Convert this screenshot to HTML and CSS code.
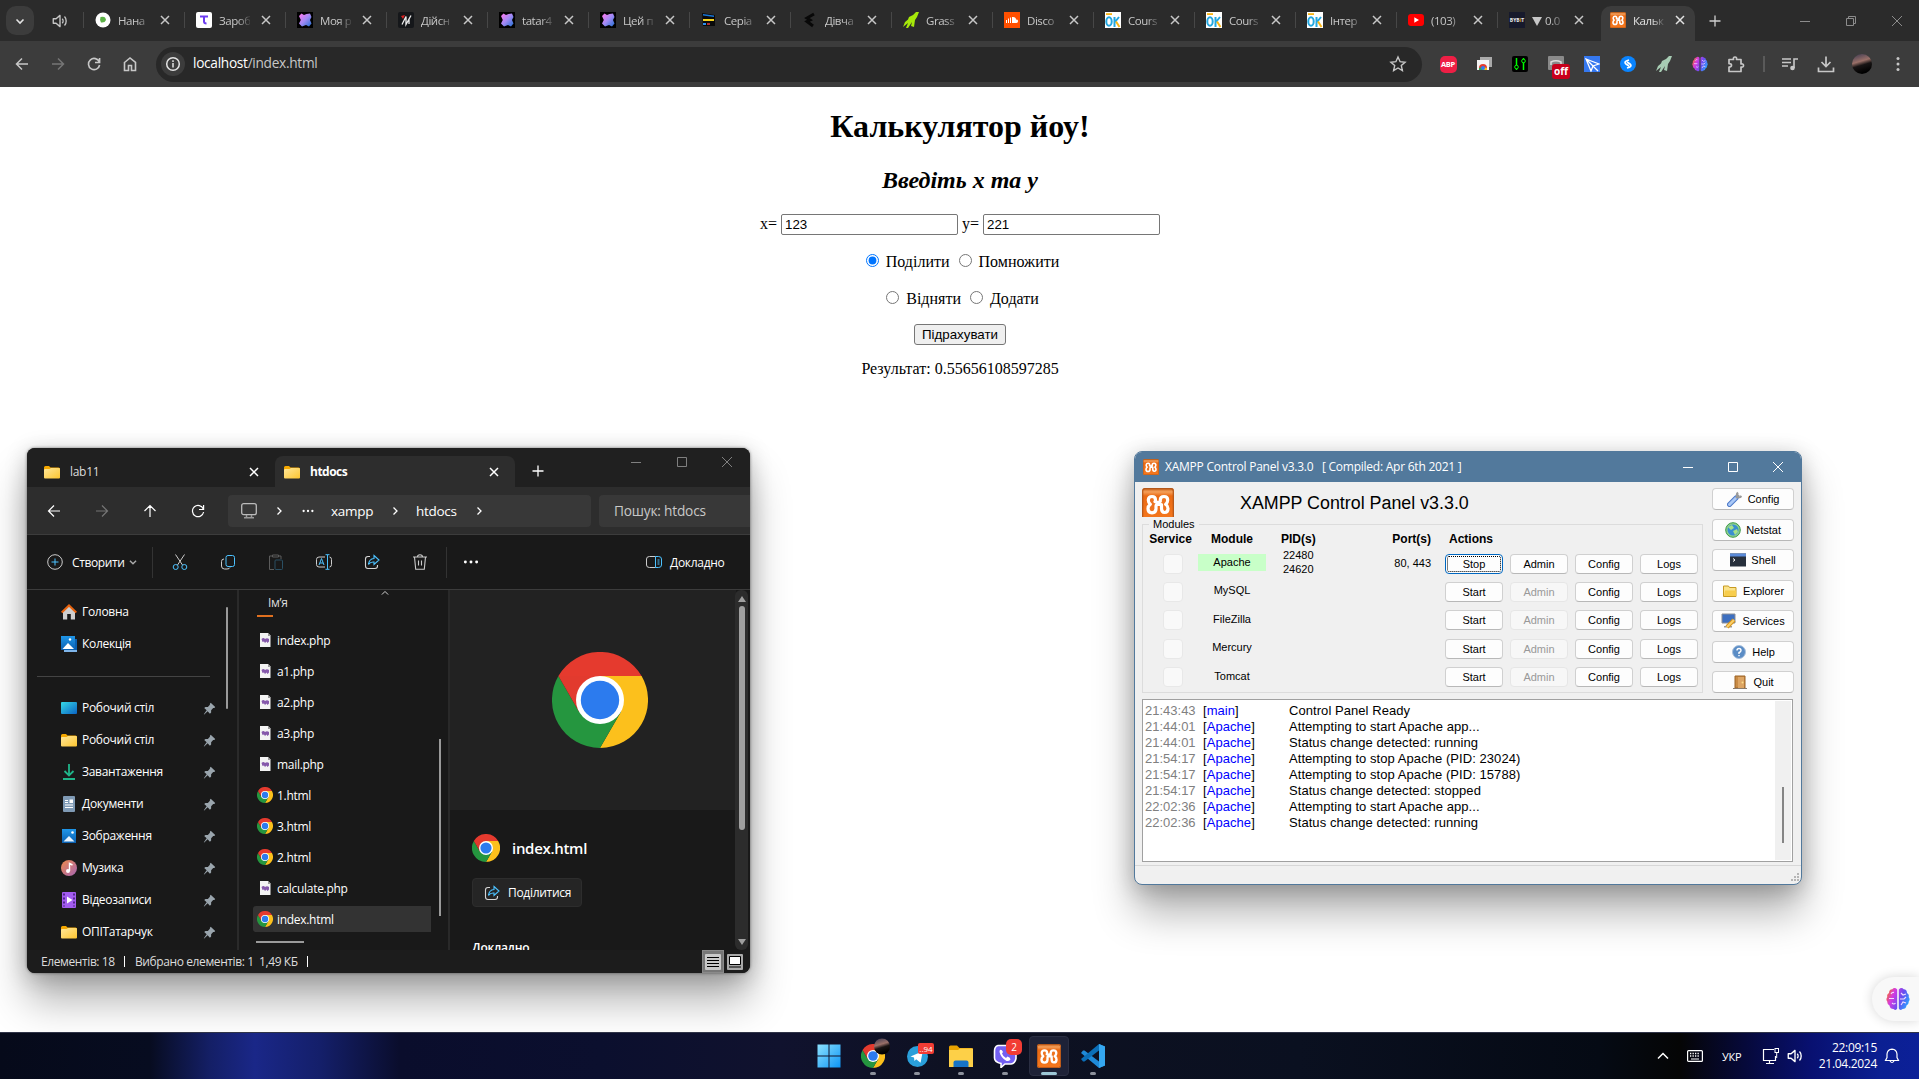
FILE: index.html
```html
<!DOCTYPE html>
<html lang="uk">
<head>
<meta charset="utf-8">
<title>Калькулятор</title>
<link rel="stylesheet" href="styles.css">
</head>
<body>
<svg class="defs" width="0" height="0">
  <defs>
    <linearGradient id="gBrain" x1="0" y1="0.3" x2="1" y2="0.7"><stop offset="0" stop-color="#f0663c"/><stop offset=".25" stop-color="#d63be0"/><stop offset=".6" stop-color="#6a4df0"/><stop offset="1" stop-color="#28a8ff"/></linearGradient>
    <linearGradient id="gX" x1="0" y1="0" x2="1" y2="1"><stop offset="0.1" stop-color="#f07af0"/><stop offset=".5" stop-color="#a08af5"/><stop offset="1" stop-color="#1f6fd0"/></linearGradient>
    <linearGradient id="gFolder" x1="0" y1="0" x2="1" y2="1"><stop offset="0" stop-color="#ffe79a"/><stop offset="1" stop-color="#fdc52f"/></linearGradient>
    <linearGradient id="gOrange" x1="0" y1="0" x2="0" y2="1"><stop offset="0" stop-color="#c25a12"/><stop offset=".12" stop-color="#f5a05a"/><stop offset=".25" stop-color="#ea6a14"/><stop offset="1" stop-color="#f5781e"/></linearGradient>
    <linearGradient id="gWin" gradientUnits="userSpaceOnUse" x1="0" y1="0" x2="24" y2="24"><stop offset="0" stop-color="#8fe3ff"/><stop offset="1" stop-color="#0a93f5"/></linearGradient>
    <linearGradient id="gDesk" x1="0" y1="0" x2="1" y2="1"><stop offset="0" stop-color="#35d9e6"/><stop offset="1" stop-color="#0b63c4"/></linearGradient>
    <linearGradient id="gPic" x1="0" y1="0" x2="0" y2="1"><stop offset="0" stop-color="#1f96e8"/><stop offset="1" stop-color="#0a5fb0"/></linearGradient>
    <linearGradient id="gMus" x1="0" y1="0" x2="1" y2="1"><stop offset="0" stop-color="#f08a4a"/><stop offset="1" stop-color="#a565b5"/></linearGradient>
    <linearGradient id="gSky" x1="0" y1="0" x2=".3" y2="1"><stop offset="0" stop-color="#3a3850"/><stop offset=".45" stop-color="#9a7068"/><stop offset=".65" stop-color="#181414"/><stop offset="1" stop-color="#000"/></linearGradient>
    <symbol id="close" viewBox="0 0 16 16"><path d="M4 4l8 8M12 4l-8 8" stroke="currentColor" stroke-width="1.5" fill="none"/></symbol>
    <symbol id="thinx" viewBox="0 0 16 16"><path d="M3 3l10 10M13 3L3 13" stroke="currentColor" fill="none"/></symbol>
    <symbol id="min" viewBox="0 0 16 16"><path d="M3 8.5h10" stroke="currentColor" fill="none"/></symbol>
    <symbol id="max" viewBox="0 0 16 16"><path d="M3.500 3.500h9v9h-9z" stroke="currentColor" fill="none"/></symbol>
    <symbol id="plus" viewBox="0 0 16 16"><path d="M8 2.500v11M2.500 8h11" stroke="currentColor" stroke-width="1.300" fill="none"/></symbol>
    <symbol id="cdown" viewBox="0 0 16 16"><path d="M4.500 6.500L8 10l3.500-3.500" stroke="currentColor" stroke-width="1.600" fill="none"/></symbol>
    <symbol id="cright" viewBox="0 0 16 16"><path d="M6.500 4.500L10 8l-3.500 3.500" stroke="currentColor" stroke-width="1.300" fill="none"/></symbol>
    <symbol id="cup" viewBox="0 0 16 16"><path d="M3 10.500L8 5.500l5 5" stroke="currentColor" stroke-width="1.500" fill="none"/></symbol>
    <symbol id="left" viewBox="0 0 16 16"><path d="M14 8H2.500M8 2.500L2.500 8 8 13.500" stroke="currentColor" stroke-width="var(--sw,1.5)" fill="none"/></symbol>
    <symbol id="right" viewBox="0 0 16 16"><path d="M2 8h11.500M8 2.500L13.500 8 8 13.500" stroke="currentColor" stroke-width="var(--sw,1.5)" fill="none"/></symbol>
    <symbol id="up" viewBox="0 0 16 16"><path d="M8 14V2.500M2.500 8L8 2.500 13.500 8" stroke="currentColor" stroke-width="1.200" fill="none"/></symbol>
    <symbol id="reload" viewBox="0 0 16 16"><path d="M13.300 6A5.600 5.600 0 1 0 13.600 9M13.600 2v4.500H9" stroke="currentColor" stroke-width="var(--sw,1.6)" fill="none"/></symbol>
    <symbol id="speaker" viewBox="0 0 16 16"><path d="M2 6h2.500L8 3v10L4.500 10H2z" stroke="currentColor" stroke-width="1.200" fill="none" stroke-linejoin="round"/><path d="M10 6c1 1 1 3 0 4M12 4c2 2 2 6 0 8" stroke="currentColor" stroke-width="1.200" fill="none"/></symbol>
    <symbol id="dots" viewBox="0 0 16 16"><circle cx="3" cy="8" r="1.300"/><circle cx="8" cy="8" r="1.300"/><circle cx="13" cy="8" r="1.300"/></symbol>
    <symbol id="chrome" viewBox="0 0 48 48"><path d="M24 24L3.200 12A24 24 0 0 1 44.800 12z" fill="#e53a2e"/><path d="M24 12h20.800A24 24 0 0 1 24 48L34.400 30z" fill="#fcc01c"/><path d="M3.200 12A24 24 0 0 0 24 48l10.400-18L24 24 13.600 30z" fill="#25963f"/><path d="M3.200 12L13.600 30 24 24V12z" fill="#e23a2e"/><circle cx="24" cy="24" r="12" fill="#fff"/><circle cx="24" cy="24" r="9.600" fill="#2c7bee"/></symbol>
    <symbol id="folder" viewBox="0 0 16 16"><path d="M0 3.500Q0 2 1.500 2H5l1.500 1.500h8Q16 3.500 16 5v3H0z" fill="#f5a800"/><path d="M0 6q0-1 1-1h4.500L7 4h8q1 0 1 1v8.500q0 1-1 1H1q-1 0-1-1z" fill="url(#gFolder)"/></symbol>
    <symbol id="xampp" viewBox="0 0 32 32"><rect width="32" height="32" rx="3" fill="url(#gOrange)"/><rect x=".7" y=".7" width="30.600" height="30.600" rx="2.500" fill="none" stroke="#b4571a" stroke-width="1.200"/><path d="M13.500 13.500V12q0-3.500-3.500-3.500T6.300 12q0 2.800 2 4.300-2.300 1.700-2.300 4.500 0 4 4 4t4-4V18q0-1.500 2-1.500t3.500 0V20q0 4.500 3 4.500 3.500 0 3.500-4 0-2.500-2.300-4.200 2-1.500 2-4.300 0-3.500-3.700-3.500t-3.700 3.500v1.500q-2.500 1.500-5.300 0z" fill="#ee7420" stroke="#fff" stroke-width="3.200" stroke-linejoin="round"/></symbol>
    <symbol id="brain" viewBox="0 0 24 24"><path d="M11.200 2.500Q8.500-.3 6.300 2.200 3 2.300 3 6 .5 7.500 1.300 10-.5 12.500 1.300 14.500 1 17.500 3.500 18.500 4 22 7.500 22q2.500 2 3.700-.5zM12.800 2.500q2.700-2.800 4.900-.3Q21 2.300 21 6q2.500 1.500 1.700 4 1.800 2.500 0 4.500.3 3-2.200 4-.5 3.500-4 3.500-2.500 2-3.700-.5z" fill="url(#gBrain)"/><path d="M3 11.500h5M5 7q1-2 3-1.500M6 16q2 2 3.500 0M15 6l2 2 3-1M14 12h4l2-2M15 18l2-3 3 1" stroke="#f2dcff" stroke-width="1.100" fill="none"/></symbol>
    <symbol id="xfav" viewBox="0 0 16 16"><path d="M0 0h16v16H0z"/><path d="M4.500 1.500l2.500 1.500 2.500-1 3.500-.5 1.500 3.500-1.500 3 1.500 3.500-2.500 3-3-1.500-4 1.500L2 11.500 3.800 8 2 4z" fill="url(#gX)"/></symbol>
    <symbol id="ok" viewBox="0 0 16 16"><path d="M0 0h16v16H0z" fill="#fff"/><path d="M1 1.200h6v1.800H1z" fill="#f9b515"/><ellipse cx="4" cy="9.500" rx="2.700" ry="4.300" fill="none" stroke="#22a7e0" stroke-width="2"/><path d="M9.500 5v10M14 5l-4 5" stroke="#22a7e0" stroke-width="2"/><path d="M11 9.500l3.500 5.500" stroke="#f9b515" stroke-width="2" fill="none"/></symbol>
    <symbol id="plant" viewBox="0 0 16 16"><path d="M0 15L2 10l3-2.500L6 5l4-2 3-3h3L14 5l-2 3-1 7-3-1 1-4-4 6H3l2-5z" fill="currentColor"/></symbol>
    <symbol id="php" viewBox="0 0 16 16"><path d="M3 1h8l2.500 2.500V15H3z" fill="#f3f3f3"/><path d="M11 1v3h2.500z" fill="#999"/><path d="M4.500 7q2-2 3.500 0 2-1.500 4 0v2.500l-1.500 1.500-1-1.500-1.500 1.500-1-1.500-1.500.5z" fill="#8558ab"/></symbol>
    <symbol id="pin" viewBox="0 0 16 16"><path d="M9.500 1L15 6.300l-1 1.200h-1.500l-2.500 2.500v3L8.500 14.500 5.700 11.500 1.500 15.500 1 15l3.500-4.800L1.500 7.500l1.500-1.500h3l2.500-2.500V2z" fill="#9aa5ad"/></symbol>
    <symbol id="share" viewBox="0 0 16 16"><path d="M6 2.500H4Q1.500 2.500 1.500 5v7Q1.500 14.500 4 14.500h7q2.500 0 2.500-2.500v-1" fill="none" stroke="#d5d5d5" stroke-width="1.100"/><path d="M10 1.500L15 6l-5 4.500V8Q6.500 7.500 4.500 10.500 5 5 10 4.500z" fill="none" stroke="#4cc2ff" stroke-width="1.100"/></symbol>
    <symbol id="image" viewBox="0 0 16 16"><path d="M1 1h14v14H1z" fill="url(#gPic)"/><path d="M2.500 13.500L8 8l5.500 5.500z" fill="#e8f5ff"/><circle cx="11.500" cy="4.500" r="1.300" fill="#fff"/></symbol>
  </defs>
</svg>

<header class="browser">
  <div class="tabs">
    <span class="tabmenu"><svg class="i16"><use href="#cdown"/></svg></span>
    <span class="audio"><svg class="i18"><use href="#speaker"/></svg></span>
    <div class="tab"><svg class="i16" viewBox="0 0 16 16"><circle cx="8" cy="8" r="7.500" fill="#fff"/><path d="M5.500 5q5-1.500 5.500 3-1 3-5 2.500-1.500-3-.5-5.500z" fill="#5cb146"/></svg><b>Нана</b><svg class="x"><use href="#close"/></svg></div>
    <div class="tab"><svg class="i16" viewBox="0 0 16 16"><rect width="16" height="16" rx="2" fill="#fff"/><path d="M4 4.500h8M8 5v4.500q0 2 2.500 2" stroke="#6c3cf0" stroke-width="2" fill="none"/></svg><b>Зароб</b><svg class="x"><use href="#close"/></svg></div>
    <div class="tab"><svg class="i16"><use href="#xfav"/></svg><b>Моя р</b><svg class="x"><use href="#close"/></svg></div>
    <div class="tab"><svg class="i16" viewBox="0 0 16 16"><rect width="16" height="16" rx="2" fill="#15171a"/><path d="M3 4l4-1-2 4z" fill="#d22"/><path d="M4 12.500l4-8v8l5-9M11 7v5" stroke="#eee" stroke-width="1.300" fill="none"/></svg><b>Дійсн</b><svg class="x"><use href="#close"/></svg></div>
    <div class="tab"><svg class="i16"><use href="#xfav"/></svg><b>tatar4</b><svg class="x"><use href="#close"/></svg></div>
    <div class="tab"><svg class="i16"><use href="#xfav"/></svg><b>Цей п</b><svg class="x"><use href="#close"/></svg></div>
    <div class="tab"><svg class="i16" viewBox="0 0 16 16"><path d="M1 1l13 2v11H2z" fill="#0a0a0a"/><path d="M2 2l11 1.500v1.500L2 3.500z" fill="#1776d8"/><path d="M2 7h11v2H2z" fill="#f4d321"/><path d="M2 11h3v2H2z" fill="#2a8ff0"/><path d="M6 11h3v2H6z" fill="#a33"/></svg><b>Серіа</b><svg class="x"><use href="#close"/></svg></div>
    <div class="tab"><svg class="i16" viewBox="0 0 16 16"><path d="M12 2L5 6l3 2-3 1.500L11 14" stroke="#080808" stroke-width="3" fill="none"/></svg><b>Дівча</b><svg class="x"><use href="#close"/></svg></div>
    <div class="tab grass"><svg class="i16"><use href="#plant"/></svg><b>Grass</b><svg class="x"><use href="#close"/></svg></div>
    <div class="tab"><svg class="i16" viewBox="0 0 16 16"><path d="M0 0h16v16H0z" fill="#ff5000"/><path d="M2.500 8v3M4.500 6.500V11M6.500 5.500V11" stroke="#fff"/><path d="M8 5q4-.5 4 2.500 2.500 0 2 2-.300 1.500-2 1.500H8z" fill="#fff"/></svg><b>Disco</b><svg class="x"><use href="#close"/></svg></div>
    <div class="tab"><svg class="i16"><use href="#ok"/></svg><b>Cours</b><svg class="x"><use href="#close"/></svg></div>
    <div class="tab"><svg class="i16"><use href="#ok"/></svg><b>Cours</b><svg class="x"><use href="#close"/></svg></div>
    <div class="tab"><svg class="i16"><use href="#ok"/></svg><b>Інтер</b><svg class="x"><use href="#close"/></svg></div>
    <div class="tab"><svg class="i16" viewBox="0 0 16 16"><rect y="2" width="16" height="12" rx="3" fill="#f00"/><path d="M6.300 5.300v5.400L11 8z" fill="#fff"/></svg><b>(103)</b><svg class="x"><use href="#close"/></svg></div>
    <div class="tab"><span class="bybit">BYB<i>I</i>T</span><b><svg class="tridown" viewBox="0 0 10 9"><path d="M0 0h10L5 9z" fill="currentColor"/></svg>0.0</b><svg class="x"><use href="#close"/></svg></div>
    <div class="tab active"><svg class="i16"><use href="#xampp"/></svg><b>Кальк</b><svg class="x"><use href="#close"/></svg></div>
    <svg class="i16 newtab"><use href="#plus"/></svg>
    <div class="wincontrols">
      <svg class="i16"><use href="#min"/></svg>
      <svg class="i16" viewBox="0 0 16 16"><path d="M3.500 5.500h7v7h-7zM5.500 5.500V3.500h7v7h-2" stroke="currentColor" fill="none"/></svg>
      <svg class="i16"><use href="#thinx"/></svg>
    </div>
  </div>
  <div class="toolbar">
    <div class="cells nav">
      <span><svg class="i16"><use href="#left"/></svg></span>
      <span class="dim"><svg class="i16"><use href="#right"/></svg></span>
      <span><svg class="i16"><use href="#reload"/></svg></span>
      <span><svg class="i18" viewBox="0 0 18 18"><path d="M3.500 7.500L9 3l5.500 4.500V15.500h-4v-5h-3v5h-4z" stroke="currentColor" stroke-width="1.600" fill="none"/></svg></span>
    </div>
    <div class="omnibox">
      <span class="info"><svg class="i16" viewBox="0 0 16 16"><circle cx="8" cy="8" r="6.300" stroke="currentColor" stroke-width="1.500" fill="none"/><path d="M8 7v4.500M8 4.300V6" stroke="currentColor" stroke-width="1.500"/></svg></span>
      <span class="url"><em>localhost</em>/index.html</span>
      <svg class="i18 star" viewBox="0 0 18 18"><path d="M9 2l2.100 4.700 5 .5-3.800 3.400 1.100 5L9 13l-4.400 2.600 1.100-5L1.900 7.200l5-.5z" stroke="currentColor" stroke-width="1.400" fill="none"/></svg>
    </div>
    <div class="cells ext">
      <span><i class="abp">ABP</i></span>
      <span><svg class="i16" viewBox="0 0 16 16"><path d="M4 1h12v10H4z" fill="#aaa"/><path d="M1 4h12v10H1z" fill="#f4f4f4"/><path d="M3 12a4 4 0 0 1 8 0" fill="#e33b2e"/><path d="M3 14v-2l4-1v3z" fill="#2da44e"/><path d="M11 14v-2l-4-1v3z" fill="#fbc116"/><circle cx="7" cy="12" r="2" fill="#2f7bed"/></svg></span>
      <span><svg class="i16" viewBox="0 0 16 16"><rect width="16" height="16" rx="2"/><path d="M4.500 2v12M11.500 2v12" stroke="#0f0" stroke-width="1.500"/><circle cx="4.500" cy="11" r="1.800" stroke="#0f0" fill="#000"/><circle cx="11.500" cy="5" r="1.800" stroke="#0f0" fill="#000"/></svg></span>
      <span class="offwrap"><svg class="i16" viewBox="0 0 16 16"><rect width="16" height="14" rx="1" fill="#8a8a8a"/><path d="M3 9V6q5-2.500 10 0v2" stroke="#ddd" fill="none" stroke-width="1.500"/></svg><i class="off">off</i></span>
      <span><svg class="i16" viewBox="0 0 16 16"><path d="M0 0h16v16H0z" fill="#3578f0"/><path d="M2 3l13 5-6 2-2 5zM2 3l8 8M9 10l5 5" stroke="#fff" fill="none" stroke-width="1.300"/></svg></span>
      <span><svg class="i16" viewBox="0 0 16 16"><circle cx="8" cy="8" r="8" fill="#0a84ff"/><path d="M9 4Q3 5.500 6 8l3 2M7 12q6-1.500 3-4L7 6" stroke="#fff" stroke-width="1.700" fill="none"/></svg></span>
      <span class="sage"><svg class="i16"><use href="#plant"/></svg></span>
      <span><svg class="i16"><use href="#brain"/></svg></span>
      <span><svg class="i18" viewBox="0 0 18 18"><path d="M2 4.500h4.500Q6 2 8 2t1.500 2.500h4.500v4.500q2.500-.5 2.500 1.500T14 12v4.500H2V12q2.500 0 2.500-1.700T2 8.700z" stroke="currentColor" stroke-width="1.700" fill="none" stroke-linejoin="round"/></svg></span>
    </div>
    <i class="vsep"></i>
    <div class="cells right">
      <span><svg class="i16" viewBox="0 0 16 16"><path d="M0 3h9M0 6.500h9M0 10h6M12 12V3h4" stroke="currentColor" stroke-width="1.600" fill="none"/><circle cx="10.500" cy="12" r="2.300" fill="currentColor"/></svg></span>
      <span><svg class="i18" viewBox="0 0 18 18"><path d="M9 1.500v9.500M4.500 7L9 11.500 13.500 7M1.500 12.500v4h15v-4" stroke="currentColor" stroke-width="1.700" fill="none"/></svg></span>
      <span><svg class="i20" viewBox="0 0 20 20"><circle cx="10" cy="10" r="10" fill="url(#gSky)"/></svg></span>
      <span><svg class="i16" viewBox="0 0 16 16" fill="currentColor"><circle cx="8" cy="2.500" r="1.500"/><circle cx="8" cy="8" r="1.500"/><circle cx="8" cy="13.500" r="1.500"/></svg></span>
    </div>
  </div>
</header>

<main class="page">
  <h1>Калькулятор йоу!</h1>
  <h2>Введіть x та y</h2>
  <p>x= <input type="text" value="123"> y= <input type="text" value="221"></p>
  <p><input type="radio" name="op" checked> Поділити <input type="radio" name="op"> Помножити</p>
  <p><input type="radio" name="op"> Відняти <input type="radio" name="op"> Додати</p>
  <p><button>Підрахувати</button></p>
  <p class="result">Результат: 0.55656108597285</p>
</main>

<section class="explorer">
  <div class="etabs">
    <div class="etab"><svg class="i16"><use href="#folder"/></svg><span>lab11</span><svg class="i16"><use href="#close"/></svg></div>
    <div class="etab on"><svg class="i16"><use href="#folder"/></svg><span>htdocs</span><svg class="i16"><use href="#close"/></svg></div>
    <svg class="i16 eplus"><use href="#plus"/></svg>
    <div class="ewin"><svg class="i16"><use href="#min"/></svg><svg class="i16"><use href="#max"/></svg><svg class="i16"><use href="#thinx"/></svg></div>
  </div>
  <div class="enav">
    <div class="ecells"><span><svg class="i16"><use href="#left"/></svg></span><span class="dim"><svg class="i16"><use href="#right"/></svg></span><span><svg class="i16"><use href="#up"/></svg></span><span><svg class="i16"><use href="#reload"/></svg></span></div>
    <div class="path">
      <svg class="i16" viewBox="0 0 16 16"><rect x=".7" y=".7" width="14.600" height="11" rx="2" fill="none" stroke="#bbb" stroke-width="1.300"/><path d="M5.500 12v2.500M10.500 12v2.500M3 14.700h10" stroke="#999" stroke-width="1.500"/></svg>
      <svg class="i16 p1"><use href="#cright"/></svg><svg class="i14 p2"><use href="#dots"/></svg><span class="p3">xampp</span><svg class="i16 p4"><use href="#cright"/></svg><span class="p5">htdocs</span><svg class="i16 p6"><use href="#cright"/></svg>
    </div>
    <div class="search">Пошук: htdocs</div>
  </div>
  <div class="ecmd">
    <svg class="i16" viewBox="0 0 16 16"><circle cx="8" cy="8" r="7.300" stroke="#ccc" fill="none"/><path d="M8 4.500v7M4.500 8h7" stroke="#4cc2ff"/></svg>
    <span class="create">Створити</span><svg class="i14 gray"><use href="#cdown"/></svg><i class="esep s1"></i>
    <div class="ecells">
      <span><svg class="i16" viewBox="0 0 16 16"><path d="M3.500.5l7 10.500M12.500.5l-7 10.500" stroke="#ccc" fill="none"/><circle cx="3.700" cy="13" r="2.500" stroke="#4cc2ff" fill="none"/><circle cx="12.300" cy="13" r="2.500" stroke="#4cc2ff" fill="none"/></svg></span>
      <span><svg class="i16" viewBox="0 0 16 16"><rect x="6" y="1.500" width="8.500" height="11" rx="2" stroke="#4cc2ff" fill="none"/><path d="M4 5Q1.500 5 1.500 7.500V12q0 3 3 3H7q2.500 0 3-1.500" stroke="#ccc" fill="none"/></svg></span>
      <span><svg class="i16" viewBox="0 0 16 16"><path d="M6 15.500H1.500V2h3M11 2h2v3M4.500 1h6v2h-6z" stroke="#5c5c5c" fill="none"/><rect x="7" y="6" width="7.500" height="9.500" rx="1" stroke="#2a4f63" fill="none"/></svg></span>
      <span><svg class="i16" viewBox="0 0 16 16"><path d="M9 3H3Q.5 3 .5 5.500v5Q.5 13 3 13h6M13.500 3q2 0 2 2.500v5q0 2.500-2 2.500" stroke="#ccc" fill="none"/><path d="M3 11l2.500-6.500L8 11M4 9h3M11.500 1v14M9.500.7h4M9.500 15.300h4" stroke="#4cc2ff" fill="none"/></svg></span>
      <span><svg class="i16"><use href="#share"/></svg></span>
      <span><svg class="i16" viewBox="0 0 16 16"><path d="M1 3h14M5.500 3q0-2.200 2.500-2.200T10.500 3M2.500 3l1.200 12.300h8.600L13.500 3M6.500 6.500v5M9.500 6.500v5" stroke="#ccc" stroke-width="1.100" fill="none"/></svg></span>
    </div>
    <i class="esep s2"></i><svg class="i18 more"><use href="#dots"/></svg>
    <svg class="i16 det" viewBox="0 0 16 16"><path d="M9.500 2.500H3.500Q.5 2.500.5 5v6q0 2.500 3 2.500h6" stroke="#ccc" fill="none"/><path d="M9.500 2.500h3q3 0 3 2.500v6q0 2.500-3 2.500h-3zM11.500 6h2M11.500 8h2M11.500 10h2" stroke="#4cc2ff" fill="none"/></svg><span class="dettext">Докладно</span>
  </div>
  <div class="ebody">
    <nav class="side">
      <div class="srow"><svg class="i16" viewBox="0 0 16 16"><path d="M2 7l6-5 6 5v8.500H9.800V10H6.200v5.500H2z" fill="#cfcfcf"/><path d="M.7 8.500L8 1.500l7.300 7" stroke="#e8640f" stroke-width="2" fill="none"/></svg><span>Головна</span></div>
      <div class="srow"><svg class="i16" viewBox="0 0 16 16"><path d="M3 3h13v13H3z" fill="#0a5fb0"/><path d="M3 14h13v2H3z" fill="#7fb5ea"/><path d="M0 0h14v14H0z" fill="url(#gPic)"/><path d="M1.500 13L7 7l6 6z" fill="#fff"/><circle cx="9" cy="3.500" r="1.200" fill="#fff"/></svg><span>Колекція</span></div>
      <hr>
      <div class="srow"><svg class="i16" viewBox="0 0 16 16"><rect y="2" width="16" height="12" rx="1" fill="url(#gDesk)"/></svg><span>Робочий стіл</span><svg class="pin"><use href="#pin"/></svg></div>
      <div class="srow"><svg class="i16"><use href="#folder"/></svg><span>Робочий стіл</span><svg class="pin"><use href="#pin"/></svg></div>
      <div class="srow"><svg class="i16" viewBox="0 0 16 16"><path d="M8 0v11.500M3.500 7L8 11.500 12.500 7M2 15h12" stroke="#20b58a" stroke-width="1.800" fill="none"/></svg><span>Завантаження</span><svg class="pin"><use href="#pin"/></svg></div>
      <div class="srow"><svg class="i16" viewBox="0 0 16 16"><rect x="2" width="12" height="16" rx="1" fill="#7f9ab5"/><path d="M4 4.500h3M4 6.500h3M4 9h8M4 11.500h8" stroke="#fff" stroke-width="1.200"/><path d="M8.500 3.500H12V7H8.500z" fill="#fff"/></svg><span>Документи</span><svg class="pin"><use href="#pin"/></svg></div>
      <div class="srow"><svg class="i16"><use href="#image"/></svg><span>Зображення</span><svg class="pin"><use href="#pin"/></svg></div>
      <div class="srow"><svg class="i16" viewBox="0 0 16 16"><circle cx="8" cy="8" r="8" fill="url(#gMus)"/><path d="M8.500 11V3.500l3 1.500" stroke="#fff" stroke-width="1.400" fill="none"/><circle cx="7" cy="11" r="2" fill="#fff"/></svg><span>Музика</span><svg class="pin"><use href="#pin"/></svg></div>
      <div class="srow"><svg class="i16" viewBox="0 0 16 16"><rect x="1" width="14" height="16" rx="1" fill="#a25cf0"/><path d="M3 1.500v13M13 1.500v13" stroke="#54258f" stroke-width="2" stroke-dasharray="2 2"/><path d="M6 4.500v7L11.500 8z" fill="#fff"/></svg><span>Відеозаписи</span><svg class="pin"><use href="#pin"/></svg></div>
      <div class="srow"><svg class="i16"><use href="#folder"/></svg><span>ОПІТатарчук</span><svg class="pin"><use href="#pin"/></svg></div>
      <i class="sbar"></i>
    </nav>
    <div class="files">
      <div class="fhead"><span>Ім’я</span><svg class="i10 asc"><use href="#cup"/></svg></div>
      <i class="obar"></i>
      <div class="frow"><svg class="i16"><use href="#php"/></svg>index.php</div>
      <div class="frow"><svg class="i16"><use href="#php"/></svg>a1.php</div>
      <div class="frow"><svg class="i16"><use href="#php"/></svg>a2.php</div>
      <div class="frow"><svg class="i16"><use href="#php"/></svg>a3.php</div>
      <div class="frow"><svg class="i16"><use href="#php"/></svg>mail.php</div>
      <div class="frow"><svg class="i16"><use href="#chrome"/></svg>1.html</div>
      <div class="frow"><svg class="i16"><use href="#chrome"/></svg>3.html</div>
      <div class="frow"><svg class="i16"><use href="#chrome"/></svg>2.html</div>
      <div class="frow"><svg class="i16"><use href="#php"/></svg>calculate.php</div>
      <div class="frow sel"><svg class="i16"><use href="#chrome"/></svg>index.html</div>
      <i class="hbar"></i><i class="fbar"></i>
    </div>
    <div class="preview">
      <div class="thumb"><svg class="big"><use href="#chrome"/></svg></div>
      <div class="pname"><svg class="i28"><use href="#chrome"/></svg><span>index.html</span></div>
      <div class="sharebtn"><svg class="i16"><use href="#share"/></svg><span>Поділитися</span></div>
      <div class="pdet">Докладно</div>
    </div>
    <div class="pscroll"><i class="tri"></i><i class="pthumb"></i><i class="tri down"></i></div>
  </div>
  <footer class="estatus">
    <span class="st1">Елементів: 18</span><i></i><span class="st2">Вибрано елементів: 1&nbsp; 1,49 КБ</span><i></i>
    <div class="views">
      <span class="v1"><svg class="i16" viewBox="0 0 16 16"><rect width="16" height="16" rx="1" fill="#c9c9c9"/><path d="M2 3.500h12M2 6.500h12M2 9.500h12M2 12.500h12" stroke="#000"/></svg></span>
      <svg class="i16" viewBox="0 0 16 16"><rect width="16" height="16" rx="1" fill="#aaa"/><path d="M2.500 2.500h11v8h-11z" fill="#fff" stroke="#000"/><path d="M2 13h12" stroke="#000"/></svg>
    </div>
  </footer>
</section>

<section class="xp">
  <div class="xtitle"><svg class="i16"><use href="#xampp"/></svg><span>XAMPP Control Panel v3.3.0&nbsp;&nbsp; [ Compiled: Apr 6th 2021 ]</span>
    <div class="xwin"><svg class="i16"><use href="#min"/></svg><svg class="i16"><use href="#max"/></svg><svg class="i16"><use href="#thinx"/></svg></div></div>
  <div class="xmain">
    <div class="xleft">
      <div class="xhead"><div class="logo"><svg><use href="#xampp"/></svg></div><span>XAMPP Control Panel v3.3.0</span></div>
      <div class="group">
        <span class="legend">Modules</span>
        <div class="mrow mh"><b>Service</b><b>Module</b><b class="pid">PID(s)</b><b class="port">Port(s)</b><b class="act">Actions</b></div>
        <div class="mrow"><i class="svc"></i><span class="mod run">Apache</span><span class="pid">22480<br>24620</span><span class="port">80, 443</span><span class="acts"><a class="stop">Stop</a><a>Admin</a><a>Config</a><a>Logs</a></span></div>
        <div class="mrow"><i class="svc"></i><span class="mod">MySQL</span><span></span><span></span><span class="acts"><a>Start</a><a class="dis">Admin</a><a>Config</a><a>Logs</a></span></div>
        <div class="mrow"><i class="svc"></i><span class="mod mid">FileZilla</span><span></span><span></span><span class="acts"><a>Start</a><a class="dis">Admin</a><a>Config</a><a>Logs</a></span></div>
        <div class="mrow"><i class="svc"></i><span class="mod mid">Mercury</span><span></span><span></span><span class="acts"><a>Start</a><a class="dis">Admin</a><a>Config</a><a>Logs</a></span></div>
        <div class="mrow"><i class="svc"></i><span class="mod low">Tomcat</span><span></span><span></span><span class="acts"><a>Start</a><a class="dis">Admin</a><a>Config</a><a>Logs</a></span></div>
      </div>
    </div>
    <div class="xside">
      <a><svg class="i16" viewBox="0 0 16 16"><path d="M2.500 13.500L9 7" stroke="#4c78c8" stroke-width="5" stroke-linecap="round"/><path d="M2.500 13.500L9 7" stroke="#a9c8f7" stroke-width="3" stroke-linecap="round"/><path d="M9 7l3-3M11 1.500q-2 2-.5 4t4-.5" stroke="#9a9a9a" stroke-width="2" fill="none"/></svg>Config</a>
      <a><svg class="i16" viewBox="0 0 16 16"><circle cx="8" cy="8" r="7.300" fill="#8fd08f" stroke="#3d9a48"/><circle cx="8" cy="8" r="5.500" fill="#3a8fd0"/><path d="M3 5l4-2 2 3-3 2zM8 9l4-2 1 3-3 3z" fill="#a5e08a"/></svg>Netstat</a>
      <a><svg class="i16" viewBox="0 0 16 16"><path d="M0 1.500h16v13H0z" fill="#27303c"/><path d="M0 1.500h16v3H0z" fill="#5a8ad8"/><path d="M3 6.500l2 1.500-2 1.500" stroke="#fff" fill="none"/></svg>Shell</a>
      <a><svg class="i16" viewBox="0 0 16 16"><path d="M1.500 3h5l1 1.500h6.500v9H1.500z" fill="#fbe38a" stroke="#c79a22"/><path d="M3 7.500h11v5.500H2z" fill="#f7cd4d"/></svg>Explorer</a>
      <a><svg class="i16" viewBox="0 0 16 16"><path d="M1 1h13v9H1z" fill="#3d6fc0" stroke="#8a8f98"/><path d="M3 13h8v1.500H3z" fill="#999"/><path d="M6 14l7-7" stroke="#d8941c" stroke-width="4"/><path d="M6 14l7-7" stroke="#fbd06a" stroke-width="2"/></svg>Services</a>
      <a><svg class="i16" viewBox="0 0 16 16"><circle cx="8" cy="8" r="6.500" fill="#5a8cc5" stroke="#a8c0dc"/><path d="M6 6.500Q6 4.500 8 4.500t2 2Q10 8 8 8.500V10M8 11v1.300" stroke="#fff" stroke-width="1.400" fill="none"/></svg>Help</a>
      <a><svg class="i16" viewBox="0 0 16 16"><path d="M3 2h10v12H3z" fill="#c98b45" stroke="#9a6226"/><path d="M6 3h6v11H6z" fill="#dda564"/><circle cx="10.500" cy="8.500" r="1" fill="#ffe08a"/><path d="M1 14.500h14" stroke="#8a7a6a"/></svg>Quit</a>
    </div>
  </div>
  <div class="log">
    <div class="lines">
      <div><time>21:43:43</time><span>[<u>main</u>]</span><span>Control Panel Ready</span></div>
      <div><time>21:44:01</time><span>[<u>Apache</u>]</span><span>Attempting to start Apache app...</span></div>
      <div><time>21:44:01</time><span>[<u>Apache</u>]</span><span>Status change detected: running</span></div>
      <div><time>21:54:17</time><span>[<u>Apache</u>]</span><span>Attempting to stop Apache (PID: 23024)</span></div>
      <div><time>21:54:17</time><span>[<u>Apache</u>]</span><span>Attempting to stop Apache (PID: 15788)</span></div>
      <div><time>21:54:17</time><span>[<u>Apache</u>]</span><span>Status change detected: stopped</span></div>
      <div><time>22:02:36</time><span>[<u>Apache</u>]</span><span>Attempting to start Apache app...</span></div>
      <div><time>22:02:36</time><span>[<u>Apache</u>]</span><span>Status change detected: running</span></div>
    </div>
    <div class="lscroll"><i></i></div>
  </div>
  <div class="xstatus"><svg viewBox="0 0 9 9"><path d="M6 0h2v2H6zM3 3h2v2H3zM6 3h2v2H6zM0 6h2v2H0zM3 6h2v2H3zM6 6h2v2H6z" fill="#b5b5b5"/></svg></div>
</section>

<aside class="brainbtn"><svg class="i24"><use href="#brain"/></svg></aside>

<footer class="taskbar">
  <div class="apps">
    <span><svg class="i24" viewBox="0 0 24 24"><path d="M.5.500h11v11H.5zM12.500.500h11v11h-11zM.5 12.500h11v11H.5zM12.500 12.500h11v11h-11z" fill="url(#gWin)"/></svg></span>
    <span class="r"><svg class="i24"><use href="#chrome"/></svg><svg class="avatar" viewBox="0 0 20 20"><circle cx="10" cy="10" r="10" fill="url(#gSky)"/></svg></span>
    <span class="r"><svg class="i21" viewBox="0 0 24 24"><circle cx="12" cy="12" r="12" fill="#2a9fda"/><path d="M4 12l14-6-2.500 13-5-4-2 2-.5-4z" fill="#fff"/></svg><i class="badge tg">..94</i></span>
    <span class="r"><svg class="i24" viewBox="0 0 24 24"><path d="M0 3q0-1.500 1.500-1.500H8L10.500 4h12Q24 4 24 5.500V10H0z" fill="#e8a200"/><path d="M0 6h9l2-1.500h13V23H0z" fill="#fdd048"/><path d="M4.500 23v-4.500q0-2 2-2h11q2 0 2 2V23z" fill="#1673c6"/></svg></span>
    <span class="r"><svg class="i24" viewBox="0 0 24 24"><path d="M5 1.500h13q5 1 5 6v7q-1 5-5 5.500h-6l-4 3.500V19.500Q1.500 18 1.500 14V7q0-4.500 3.500-5.500z" fill="#7360f2" stroke="#fff" stroke-width="1.600"/><path d="M7 6q1.500-1 3 2l-1 1.500q1 3 4 4.500l1.500-1.500q3 1 3 3-1.500 2-4 1.500Q8 14 6.500 8q0-1.500.5-2z" fill="#fff"/></svg><i class="badge vb">2</i></span>
    <span class="r cur"><svg class="i24"><use href="#xampp"/></svg></span>
    <span class="r"><svg class="i24" viewBox="0 0 24 24"><path d="M18 0l6 2.500v19L18 24 0 9l2-2.500h1.500L18 17.500z" fill="#1f8ad8"/><path d="M18 0v6.500L3.500 17.500H2L0 15z" fill="#0b6fb8"/><path d="M18 0l6 2.500v19L18 24z" fill="#35a7f0"/></svg></span>
  </div>
  <div class="tray">
    <svg class="i16"><use href="#cup"/></svg>
    <svg class="i16 kb" viewBox="0 0 16 16"><rect x=".6" y="2.600" width="14.800" height="10.800" rx="1" stroke="currentColor" stroke-width="1.200" fill="none"/><path d="M3 5.500h10M3 8h10" stroke="currentColor" stroke-width="1.300" stroke-dasharray="1.300 1.200"/><path d="M4 11h8" stroke="currentColor"/></svg>
    <span class="lang">УКР</span>
    <svg class="i18 net" viewBox="0 0 18 18"><path d="M12 2.500H1.500v11h12V9M7.500 13.500V16M4 16.500h8" stroke="currentColor" stroke-width="1.200" fill="none"/><rect x="13" y="1.500" width="3.500" height="4" stroke="currentColor" fill="none"/><path d="M14.700 6v5" stroke="currentColor"/></svg>
    <svg class="i18 vol"><use href="#speaker"/></svg>
    <div class="clock">22:09:15<br>21.04.2024</div>
    <svg class="i16 bell" viewBox="0 0 16 16"><path d="M1.500 12.500h13L13 9.500V6Q12.500 1.500 8 1.200 3.500 1.500 3 6v3.500zM6 13q2 3 4 0" stroke="currentColor" stroke-width="1.200" fill="none"/></svg>
  </div>
</footer>
</body>
</html>
```
FILE: styles.css
```css
* { box-sizing: border-box; }
html, body { margin: 0; height: 100%; overflow: hidden; }
body { position: relative; width: 1919px; height: 1079px; background: #fff; font-family: "Open Sans", "Noto Sans", sans-serif; display: flex; flex-direction: column; }
svg { display: block; flex: none; }
.defs { position: absolute; }
i, em { font-style: normal; }
.i10 { width: 10px; height: 10px; }
.i14 { width: 14px; height: 14px; }
.i16 { width: 16px; height: 16px; }
.i18 { width: 18px; height: 18px; }
.i20 { width: 20px; height: 20px; }
.i21 { width: 21px; height: 21px; }
.i24 { width: 24px; height: 24px; }
.i28 { width: 28px; height: 28px; }

/* browser */
.browser { height: 87px; background: #3c3c3c; color: #c7c7c7; flex: none; }
.tabs { height: 41px; background: #2b2b2b; display: flex; align-items: center; }
.tabmenu { width: 28px; height: 29px; margin-left: 6px; border-radius: 10px; background: #3c3c3c; display: flex; align-items: center; justify-content: center; color: #e3e3e3; }
.audio { width: 49px; padding-left: 17px; }
.tab { width: 101px; height: 40px; display: flex; align-items: center; align-self: flex-start; position: relative; padding-left: 11px; flex: none; }
.tab::before { content: ""; width: 1px; height: 16px; background: #474747; margin-left: -11px; margin-right: 11px; }
.tab b { font-size: 11.500px; font-weight: 500; letter-spacing: -.45px; width: 31px; margin-left: 7px; display: flex; overflow: hidden; white-space: nowrap; -webkit-mask-image: linear-gradient(90deg, #000 60%, rgba(0,0,0,.15)); mask-image: linear-gradient(90deg, #000 60%, rgba(0,0,0,.15)); }
.tab .x { width: 16px; height: 16px; margin-left: 8px; }
.tridown { width: 10px; height: 9px; margin: 4px 3px 0 0; }
.grass .i16 { color: #a6e80a; }
.bybit { width: 16px; height: 16px; background: #171a2c; color: #eee; font-size: 5px; font-weight: 700; display: flex; align-items: center; justify-content: center; }
.bybit i { color: #f7a600; }
.active { color: #e3e3e3; }
.active::before { background: transparent; }
.active::after { content: ""; position: absolute; z-index: 0; left: 3px; top: 6px; width: 94px; height: 35px; border-radius: 10px 10px 0 0; background: #3c3c3c; }
.active > * { position: relative; z-index: 1; }
.newtab { margin-left: 8px; color: #d0d0d0; }
.wincontrols { display: flex; gap: 30px; margin-left: auto; padding-right: 14px; color: #8c8c8c; }
.toolbar { height: 46px; display: flex; align-items: center; padding: 0 0 0 4px; }
.cells { display: flex; }
.cells span { width: 36px; height: 36px; display: flex; align-items: center; justify-content: center; }
.dim { color: #757575; }
.omnibox { width: 1266px; height: 35px; margin-left: 8px; border-radius: 18px; background: #282828; display: flex; align-items: center; padding: 0 15px 0 5px; }
.info { width: 24px; height: 24px; border-radius: 50%; background: #3c3c3c; display: flex; align-items: center; justify-content: center; color: #e3e3e3; }
.url { margin: -3px 0 0 8px; font-size: 13.700px; letter-spacing: -.3px; }
.url em { color: #fff; }
.star { margin-left: auto; }
.ext { margin-left: 8px; }
.abp { width: 17px; height: 17px; border-radius: 5px; background: #ee1f45; color: #fff; font: 700 7.500px/17px "Open Sans", sans-serif; letter-spacing: -.3px; text-align: center; }
.offwrap { position: relative; }
.off { position: absolute; left: 14px; top: 18px; width: 18px; height: 15px; border-radius: 3px; background: #c8001c; color: #fff; font-size: 10px; font-weight: 700; line-height: 14px; text-align: center; }
.sage { color: #a8cdb4; }
.vsep { width: 2px; height: 16px; background: #5a5a5a; margin: 0 7px 0 9px; }

/* calculator page */
.page { text-align: center; font: 16px/18px "Liberation Serif", serif; color: #000; padding-left: 1px; }
.page h1 { font-size: 32px; line-height: 37px; margin: 21px 0 22px; }
.page h2 { font-size: 24px; line-height: 27px; font-style: italic; margin: 0 0 20px; }
.page p { height: 20.300px; margin: 0 0 16px; }
.page p:nth-of-type(1) { margin-bottom: 17px; }
.page input[type=text] { width: 177px; height: 21px; font: 13.333px "Liberation Sans", sans-serif; border: 1px solid #767676; border-radius: 2px; padding: 1px 3px; }
.page input[type=radio] { margin: 3px 3px 0 5px; }
.page button { font: 13.333px "Liberation Sans", sans-serif; width: 92px; height: 21px; padding: 0; border: 1px solid #767676; border-radius: 3px; background: #efefef; }

/* file explorer */
.explorer { position: absolute; left: 27px; top: 448px; width: 723px; height: 525px; border-radius: 8px; overflow: hidden; background: #191919; color: #fff; font-size: 12px; letter-spacing: -.3px; box-shadow: 0 0 3px rgba(0,0,0,.5), 0 28px 40px rgba(0,0,0,.3), 0 4px 22px rgba(0,0,0,.22); display: flex; flex-direction: column; }
.etabs { height: 39px; background: #202020; display: flex; align-items: flex-end; flex: none; }
.etab { width: 239px; height: 31px; margin-left: 9px; padding: 0 13px 0 8px; display: flex; align-items: center; }
.etab span { margin: 0 auto 0 10px; color: #ddd; }
.etab + .etab { margin-left: 0; width: 240px; padding-left: 9px; }
.etab.on { background: #2d2d2d; border-radius: 8px 8px 0 0; }
.etab.on span { color: #fff; font-weight: 700; letter-spacing: -.5px; }
.eplus { margin: 0 0 8px 15px; }
.ewin { display: flex; gap: 29.500px; margin: 0 15px 17px auto; color: #808080; }
.enav { height: 48px; background: #2d2d2d; border-bottom: 1px solid #3c3c3c; display: flex; align-items: center; padding-left: 3px; flex: none; }
.ecells { display: flex; --sw: 1.200; }
.ecells span { width: 48px; display: flex; justify-content: center; }
.path { width: 363px; height: 32px; margin-left: 6px; border-radius: 4px; background: #383838; display: flex; align-items: center; padding-left: 13px; font-size: 13.500px; }
.p1 { margin-left: 14px; }
.p2 { margin-left: 14px; fill: #fff; }
.p3 { width: 42px; margin-left: 16px; }
.p4 { margin-left: 14px; }
.p5 { width: 42px; margin-left: 13px; }
.p6 { margin-left: 13px; }
.search { width: 151px; height: 32px; margin-left: 8px; border-radius: 4px 0 0 4px; background: #383838; color: #c8c8c8; font-size: 13.700px; line-height: 32px; padding-left: 15px; white-space: nowrap; letter-spacing: -.2px; }
.ecmd { height: 55px; border-bottom: 1px solid #3c3c3c; display: flex; align-items: center; padding-left: 20px; flex: none; }
.create { margin-left: 9px; width: 53px; letter-spacing: -.4px; }
.gray { margin-left: 1px; color: #aaa; }
.esep { width: 1px; height: 31px; background: #333; }
.s1 { margin-left: 12px; }
.s1 + .ecells { margin-left: 3px; }
.s2 { margin-left: 2px; }
.more { margin-left: 15px; fill: #fff; }
.det { margin-left: auto; }
.dettext { margin-left: 8px; margin-right: 25px; width: 55px; }
.ebody { height: 360px; display: flex; overflow: hidden; flex: none; }
.side { width: 210px; position: relative; padding: 6px 0 0 34px; flex: none; }
.srow { height: 32px; display: flex; align-items: center; }
.srow span { margin: -1px 0 0 5px; width: 120px; white-space: nowrap; }
.pin { width: 13px; height: 13px; margin-left: 1px; }
.side hr { border: 0; height: 1px; background: #444; margin: 16px 27px 15px -24px; }
.sbar { position: absolute; left: 199px; top: 17px; width: 2px; height: 102px; background: #9a9a9a; border-radius: 1px; }
.files { width: 211px; position: relative; border-left: 2px solid #2a2a2a; padding-left: 14px; flex: none; }
.fhead { height: 24px; display: flex; padding: 4px 0 0 15px; color: #ddd; font-size: 12px; }
.asc { margin: -6px 0 0 92px; }
.obar { display: block; width: 16px; height: 2px; margin: 1px 0 10px 4px; background: #e0701f; }
.frow { height: 26px; width: 178px; margin-bottom: 5px; padding-left: 4px; display: flex; align-items: center; gap: 4px; border-radius: 3px; }
.sel { background: #333; border-radius: 3px 0 0 3px; }
.hbar { display: block; width: 48px; height: 2px; background: #9a9a9a; margin: 9px 0 0 3px; }
.fbar { position: absolute; right: 7px; top: 149px; width: 2px; height: 177px; background: #9a9a9a; }
.preview { width: 288px; border-left: 2px solid #292929; flex: none; }
.thumb { height: 220px; background: #222; display: flex; align-items: center; justify-content: center; padding-left: 13px; }
.big { width: 96px; height: 96px; }
.pname { display: flex; align-items: center; gap: 12px; margin: 24px 0 16px 22px; font-size: 15px; font-weight: 600; }
.sharebtn { width: 110px; height: 29px; margin-left: 22px; border: 1px solid #2d2d2d; border-radius: 4px; background: #252525; display: flex; align-items: center; gap: 8px; padding-left: 11px; }
.pdet { margin: 32px 0 0 22px; font-weight: 600; line-height: 17px; }
.pscroll { width: 13px; margin-left: -1px; background: #2c2c2c; border-radius: 6px; display: flex; flex-direction: column; align-items: center; padding: 6px 0 5px; }
.tri { border: 4px solid transparent; border-top: 0; border-bottom: 6px solid #9f9f9f; }
.down { transform: rotate(180deg); margin-top: auto; }
.pthumb { width: 6px; height: 224px; margin-top: 4px; border-radius: 3px; background: #9f9f9f; }
.estatus { height: 23px; background: #1c1c1c; display: flex; align-items: center; padding-left: 14px; font-size: 12px; letter-spacing: -.4px; color: #ddd; white-space: nowrap; }
.estatus > i { width: 1px; height: 11px; background: #fff; }
.st1 { width: 83px; }
.st2 { margin-left: 10px; width: 172px; }
.views { margin-left: auto; margin-right: 7px; display: flex; align-items: center; gap: 3px; }
.v1 { width: 22px; height: 23px; background: #777; border: 1px solid #8a8a8a; display: flex; align-items: center; justify-content: center; }

/* control panel */
.xp { position: absolute; left: 1134px; top: 451px; width: 668px; height: 434px; border: 1px solid #52799c; border-radius: 8px; overflow: hidden; background: #f0f0f0; color: #000; font: 11px "Liberation Sans", Arial, sans-serif; box-shadow: 0 28px 40px rgba(0,0,0,.3), 0 4px 22px rgba(0,0,0,.22); display: flex; flex-direction: column; }
.xtitle { height: 30px; background: #52799c; color: #fff; display: flex; align-items: center; padding-left: 8px; font: 12px "Open Sans", sans-serif; letter-spacing: -.24px; flex: none; }
.xtitle span { margin: -1px 0 0 6px; }
.xwin { display: flex; gap: 29px; margin-left: auto; margin-right: 15px; }
.xmain { height: 216px; display: flex; padding: 6px 7px 0 7px; flex: none; }
.xleft { width: 562px; }
.xhead { height: 36px; display: flex; }
.logo { width: 32px; height: 29px; overflow: hidden; }
.logo svg { width: 32px; height: 32px; }
.xhead span { font-size: 17.850px; line-height: 30px; margin-left: 66px; }
.group { position: relative; height: 169px; border: 1px solid #dcdcdc; }
.legend { position: absolute; left: 6px; top: -7px; padding: 0 4px; background: #f0f0f0; font-size: 11px; line-height: 13px; }
.mrow { height: 28.200px; display: grid; grid-template-columns: 55px 68px 86px 79px 14px 252px; align-items: center; text-align: center; }
.mh { height: 25px; font-size: 12px; }
.mh b { padding-top: 2px; }
.mrow .pid { text-align: left; padding-left: 15px; line-height: 14px; }
.mrow span.pid { padding-left: 17px; position: relative; top: -2px; }
.mrow .port { text-align: right; }
.mrow span.port { position: relative; top: -1px; }
.mh .act { grid-column: 6; text-align: left; padding-left: 4px; }
.svc { width: 20px; height: 20px; justify-self: center; margin-left: 4px; border: 1px solid #e8e8e8; border-radius: 4px; background: #f9f9f9; }
.mod { line-height: 17px; position: relative; top: -2px; }
.mid { top: -1px; }
.low { top: 0; }
.run { background: #c8ffc8; }
.acts { grid-column: 6; display: grid; grid-template-columns: repeat(4, 58px); gap: 7px; }
.xp a { height: 20px; border: 1px solid #d0d0d0; border-bottom-color: #b8b8b8; border-radius: 4px; background: #fdfdfd; display: flex; align-items: center; justify-content: center; }
.xp .stop { border: 1px solid #0067c0; outline: 1px dotted #000; outline-offset: -3px; }
.xp .dis { color: #999; background: #f7f7f7; border-color: #e6e6e6; }
.xside { margin-left: 9px; width: 82px; display: flex; flex-direction: column; gap: 8.500px; }
.xside a { height: 22px; gap: 5px; }
.log { height: 163px; margin: 1px 8px 0 7px; border: 1px solid #a0a0a0; background: #fff; display: flex; justify-content: space-between; padding: 1px; flex: none; }
.lines { padding: 2px 0 0 1px; font-size: 13px; line-height: 16px; letter-spacing: .06px; }
.lines div { display: grid; grid-template-columns: 58px 86px 300px; white-space: nowrap; }
.lines time { color: #808080; letter-spacing: 0; }
.lines u { color: #00f; text-decoration: none; }
.lscroll { width: 16px; background: #f0f0f0; padding: 86px 0 0 7px; }
.lscroll i { display: block; width: 2px; height: 56px; background: #858585; }
.xstatus { margin-top: 3px; border-top: 1px solid #d7d7d7; flex: 1; display: flex; align-items: flex-end; justify-content: flex-end; padding: 0 1px 2px; }
.xstatus svg { width: 9px; height: 9px; }

/* floating button and taskbar */
.brainbtn { position: absolute; right: 0; top: 977px; width: 47px; height: 44px; border-radius: 22px 0 0 22px; background: #f8f8f8; box-shadow: 0 0 12px rgba(0,0,0,.16); display: flex; align-items: center; padding-left: 14px; }
.taskbar { position: absolute; left: 0; bottom: 0; width: 1919px; height: 47px; border-top: 1px solid #303448; color: #fff; display: flex; justify-content: space-between; background: linear-gradient(90deg, #060a1a 0, #070c20 150px, #141f66 210px, #1a2788 255px, #141f6a 320px, #0a0d2c 400px, #0b0f2e 600px, #10122e 780px, #0e1122 950px, #0a1020 1300px, #050a14 1600px, #050505 1680px, #06093a 1745px, #081070 1810px, #0b1f92 1880px, #0c2098 1919px); }
.apps { display: flex; align-items: center; margin-left: 807px; }
.apps span { width: 44px; height: 40px; display: flex; align-items: center; justify-content: center; position: relative; }
.apps .r::after { content: ""; position: absolute; left: 19px; bottom: 1px; width: 6px; height: 3px; border-radius: 2px; background: #8d919c; }
.apps .cur { width: 40px; margin: 0 2px; background: #1e2237; border: 1px solid #2a2e42; border-radius: 4px; }
.apps .cur::after { left: 11px; bottom: 0; width: 16px; background: #9cc7d6; }
.avatar { position: absolute; left: 23px; top: 2px; width: 16px; height: 17px; }
.badge { position: absolute; background: #f23c34; color: #fff; text-align: center; }
.tg { left: 23px; top: 7px; width: 16px; height: 11px; border-radius: 2px; font-size: 8px; line-height: 11px; }
.vb { left: 23px; top: 3px; width: 16px; height: 16px; border-radius: 5px; font-size: 10px; line-height: 16px; }
.tray { display: flex; align-items: center; padding-right: 19px; }
.kb { margin-left: 16px; }
.lang { width: 23px; margin-left: 19px; font-size: 11px; letter-spacing: -.3px; }
.net { margin-left: 17px; }
.vol { margin-left: 6px; }
.clock { width: 73px; font-size: 12px; line-height: 16px; letter-spacing: -.3px; text-align: right; }
.bell { margin-left: 7px; }
```
